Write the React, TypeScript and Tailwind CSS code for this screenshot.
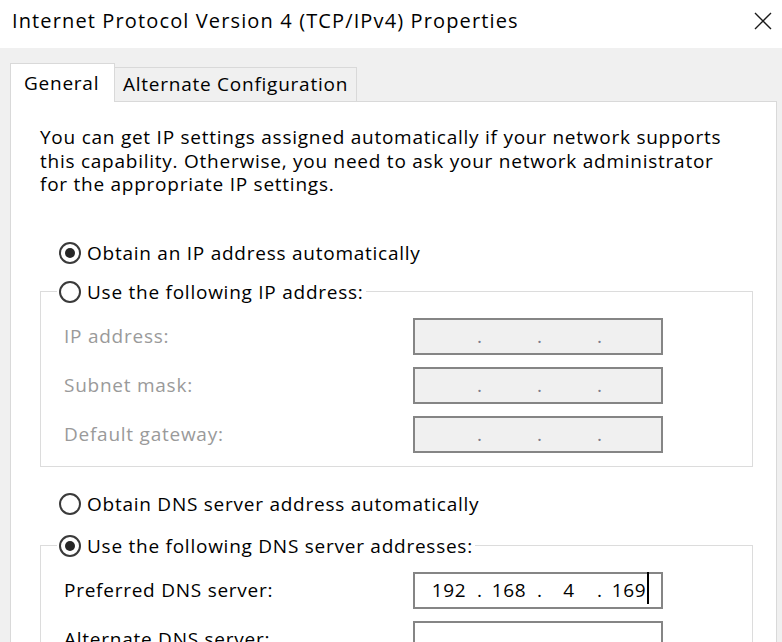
import React from "react";

const FONT = "font-['Open_Sans','Noto_Sans',sans-serif]";

function Radio({ checked }: { checked?: boolean }) {
  return (
    <span className="flex h-[22px] w-[22px] shrink-0 items-center justify-center rounded-full border-2 border-[#3a3a3a] bg-white">
      {checked && <span className="h-[10px] w-[10px] rounded-full bg-[#262626]" />}
    </span>
  );
}

function RadioLabel({ checked, label }: { checked?: boolean; label: string }) {
  return (
    <span className="flex h-[24px] items-center gap-[6px]">
      <Radio checked={checked} />
      <span className="leading-[24px]">{label}</span>
    </span>
  );
}

function IpBox({
  parts,
  disabled,
  caret,
}: {
  parts: string[];
  disabled?: boolean;
  caret?: boolean;
}) {
  return (
    <div
      className={`flex h-[37px] w-[250px] items-center border-2 border-[#858585] pl-[6px] tracking-normal ${
        disabled ? "bg-[#f0f0f0] text-[#7d7d8c]" : "bg-white text-black"
      }`}
    >
      {parts.map((p, i) => (
        <React.Fragment key={i}>
          {i > 0 && <span className="w-[4px] text-center">.</span>}
          <span className="w-[56px] text-center">
            <span className="relative tracking-[0.6px]">
              {p}
              {caret && i === parts.length - 1 && (
                <span className="absolute left-full top-[-5px] ml-[1px] h-[32px] w-[2px] bg-black" />
              )}
            </span>
          </span>
        </React.Fragment>
      ))}
    </div>
  );
}

function FieldRow({
  label,
  disabled,
  children,
}: {
  label: string;
  disabled?: boolean;
  children: React.ReactNode;
}) {
  return (
    <div className="flex h-[37px] items-center justify-between">
      <span className={disabled ? "text-[#9a9a9a]" : "text-black"}>{label}</span>
      {children}
    </div>
  );
}

export default function App() {
  const empty = ["", "", "", ""];
  return (
    <div
      className={`h-[642px] w-[782px] overflow-hidden bg-[#f0f0f0] text-[19px] tracking-[0.75px] text-black ${FONT}`}
    >
      {/* Title bar */}
      <div className="flex h-[48px] items-start justify-between bg-white pl-[12px] pr-[10px]">
        <span className="pt-[7px] text-[20px] leading-[28px] tracking-[1.13px]">
          Internet Protocol Version 4 (TCP/IPv4) Properties
        </span>
        <svg width="18" height="18" viewBox="0 0 18 18" className="mt-[12px]">
          <path d="M1 1 L17 17 M17 1 L1 17" stroke="#1a1a1a" strokeWidth="1.4" />
        </svg>
      </div>

      <div className="pl-[10px] pr-[5px] pt-[15px]">
        {/* Tabs */}
        <div className="flex h-[38px] items-end">
          <div className="relative z-10 -mb-px flex h-[39px] w-[105px] items-center border-l border-r border-t border-[#d9d9d9] bg-white pl-[13px]">
            General
          </div>
          <div className="flex h-[34px] w-[242px] items-center border-r border-t border-[#d9d9d9] pl-[8px]">
            Alternate Configuration
          </div>
        </div>

        {/* Panel */}
        <div className="h-[600px] border border-[#d9d9d9] bg-white pl-[29px] pr-[23px] pt-[24px]">
          <p className="leading-[23.5px]">
            You can get IP settings assigned automatically if your network supports
            <br />
            this capability. Otherwise, you need to ask your network administrator
            <br />
            for the appropriate IP settings.
          </p>

          <div className="ml-[19px] mt-[44px]">
            <RadioLabel checked label="Obtain an IP address automatically" />
          </div>

          <fieldset className="mt-[15px] border border-[#dcdcdc] pb-[13px] pl-[23px] pr-[89px] pt-[14px]">
            <legend className="-ml-[7px] px-[2px]">
              <RadioLabel label="Use the following IP address:" />
            </legend>
            <div className="flex flex-col gap-[12px]">
              <FieldRow label="IP address:" disabled>
                <IpBox parts={empty} disabled />
              </FieldRow>
              <FieldRow label="Subnet mask:" disabled>
                <IpBox parts={empty} disabled />
              </FieldRow>
              <FieldRow label="Default gateway:" disabled>
                <IpBox parts={empty} disabled />
              </FieldRow>
            </div>
          </fieldset>

          <div className="ml-[19px] mt-[25px]">
            <RadioLabel label="Obtain DNS server address automatically" />
          </div>

          <fieldset className="mt-[18px] border border-[#dcdcdc] pb-[13px] pl-[23px] pr-[89px] pt-[14px]">
            <legend className="-ml-[7px] px-[2px]">
              <RadioLabel checked label="Use the following DNS server addresses:" />
            </legend>
            <div className="flex flex-col gap-[12px]">
              <FieldRow label="Preferred DNS server:">
                <IpBox parts={["192", "168", "4", "169"]} caret />
              </FieldRow>
              <FieldRow label="Alternate DNS server:">
                <IpBox parts={empty} />
              </FieldRow>
            </div>
          </fieldset>
        </div>
      </div>
    </div>
  );
}
